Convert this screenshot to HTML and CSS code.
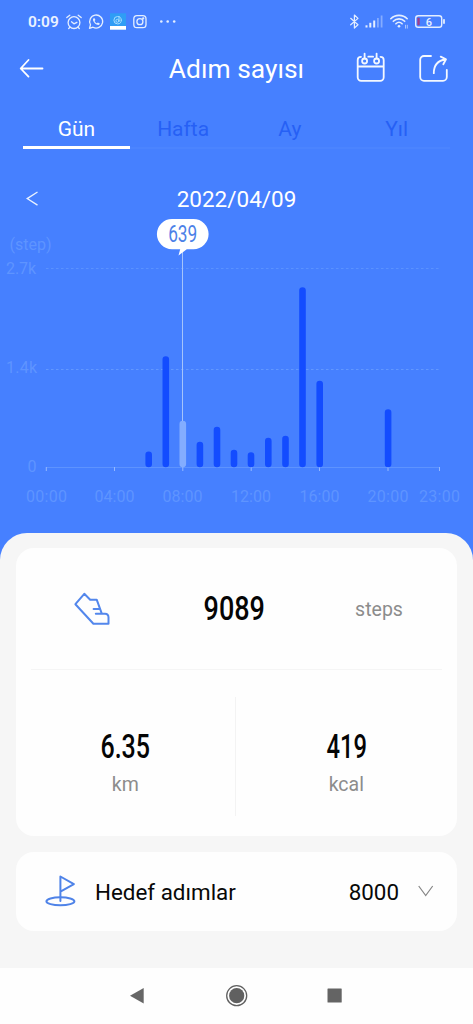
FILE: index.html
```html
<!DOCTYPE html>
<html lang="tr">
<head>
<meta charset="utf-8">
<title>Adım sayısı</title>
<link rel="stylesheet" href="styles.css">
</head>
<body>
<div class="screen">
  <div class="status">
    <span class="clock">0:09</span>
    <svg class="status-left" width="106" height="20" viewBox="64 12 106 20" fill="none" stroke="#e4eeff" stroke-width="1.3" stroke-linecap="round" stroke-linejoin="round">
      <circle cx="74" cy="22.6" r="5.9"/><path d="M71.5 21.8l2.4 2 3-1.5M66.800 17.600l3-2.400M81.200 17.600l-3-2.400M70 27.200l-1.300 1.300M78 27.200l1.300 1.300"/>
      <path d="M89.500 28.300l1-3.600a6.500 6.500 0 1 1 2.500 2.500z"/>
      <path d="M93.600 18.300c-1.300 1-.5 3.300 1.200 4.900 1.700 1.600 3.900 2.300 4.800 1.100l.2-.9-1.900-1-1 .9c-1.200-.5-1.900-1.200-2.300-2.300l.8-.9-.8-1.800z" fill="#e4eeff" stroke="none"/>
      <path d="M110 13.300h16v16.200h-16z" fill="#2f9df5" stroke="none"/><path d="M110 26h16v3.700h-16z" fill="#fff" stroke="none"/>
      <circle cx="117.600" cy="20.200" r="3.700" stroke="#a5dcff" stroke-width="1"/><circle cx="117.400" cy="20.800" r="1.500" stroke="#a5dcff" stroke-width="1"/><path d="M119 16.500v5" stroke="#a5dcff" stroke-width="1"/>
      <rect x="133.800" y="15.700" width="12.200" height="12" rx="3.200"/><circle cx="139.900" cy="21.700" r="3"/><circle cx="143.200" cy="18.400" r=".5"/>
      <g fill="#e4eeff" stroke="none"><circle cx="161.300" cy="21.500" r="1.300"/><circle cx="167.700" cy="21.500" r="1.300"/></g>
    </svg>
    <svg class="status-dot" width="7" height="20" viewBox="170 12 7 20"><circle cx="174.200" cy="21.500" r="1.300" fill="#e4eeff"/></svg>
    <svg class="status-right" width="100" height="20" viewBox="347 12 100 20" fill="none" stroke="#e4eeff" stroke-width="1.200" stroke-linecap="round" stroke-linejoin="round">
      <path d="M350.700 18.300l7.300 6.400-3.600 3.300V15l3.600 3.400-7.300 6.400"/>
      <g stroke="none" fill="#e4eeff"><rect x="365.500" y="25.300" width="2" height="2.200"/><rect x="369.300" y="22.800" width="2" height="4.700"/><rect x="373.200" y="20.500" width="2" height="7"/><rect x="377" y="18" width="1.800" height="9.500" opacity=".4"/><rect x="380.700" y="15.500" width="1.800" height="12" opacity=".4"/></g>
      <path d="M390.800 18.700c4.400-4.500 12-4.500 16.400 0M393.300 21.300c3.200-3.200 8.200-3.200 11.400 0M395.900 23.800c1.800-1.800 4.400-1.800 6.200 0" stroke-width="1.600"/><circle cx="399" cy="26.200" r="1.300" fill="#e4eeff" stroke="none"/><path d="M405.500 25.200v3M407.300 25.200v3" stroke-width=".9" opacity=".7"/>
      <rect x="415.700" y="15.700" width="26" height="11.600" rx="2.600" stroke-width="1.400"/><path d="M444 19.800v3.200" stroke-width="1.800"/><rect x="417.400" y="17.700" width="2.300" height="7.600" rx=".7" fill="#a33b87" stroke="none"/>
      <text x="429" y="25.500" class="battery-text">6</text>
    </svg>
  </div>

  <header class="header">
    <svg class="back" width="28" height="24" viewBox="18 57 28 24" fill="none" stroke="#fff" stroke-width="1.800" stroke-linecap="round" stroke-linejoin="round"><path d="M42.500 68.500H20.700M28.500 60l-7.800 8.500 7.800 8.100"/></svg>
    <h1 class="title">Adım sayısı</h1>
    <svg class="actions" width="96" height="34" viewBox="354 51 96 34" fill="none" stroke="#f4f8ff" stroke-width="1.800" stroke-linecap="round" stroke-linejoin="round">
      <path d="M361 56.800c-2.200 0-3.300 1.500-3.300 3.200v17.300a3.500 3.500 0 0 0 3.500 3.500h19a3.500 3.500 0 0 0 3.500-3.500V60c0-1.700-1.100-3.200-3.200-3.200M368.300 56.700h4.800M357.700 66.500h26"/>
      <circle cx="364.600" cy="61" r="2.500"/><circle cx="376.600" cy="61" r="2.500"/><path d="M364.600 53.600v4.800M376.600 53.600v4.800"/>
      <path d="M431 56h-7a3.800 3.800 0 0 0-3.800 3.800v17.200a3.800 3.800 0 0 0 3.800 3.800h19a3.800 3.800 0 0 0 3.800-3.800v-7.200M433.800 73.200c0-8 3.400-12.600 11.700-13.700M440.700 56.600l5.300 2.700-2.700 5"/>
    </svg>
  </header>

  <nav class="tabs">
    <span class="tab active">Gün</span><span class="tab">Hafta</span><span class="tab">Ay</span><span class="tab">Yıl</span>
  </nav>

  <div class="date-row">
    <svg class="prev" width="16" height="18" viewBox="24 190 16 18" fill="none" stroke="#eaf2ff" stroke-width="1.300"><path d="M37.500 192l-10.300 6.600 10.300 6.500"/></svg>
    <span class="date">2022/04/09</span>
  </div>

  <svg class="chart" width="473" height="300" viewBox="0 215 473 300">
    <g stroke="#5a92ff" stroke-width="1" stroke-dasharray="2.500 2.500"><path d="M46 268.500h393"/><path d="M46 369.500h393" stroke="#6298ff"/></g>
    <path d="M46 467.500h393" stroke="#5d93ff"/>
    <g class="axis">
      <text x="9.500" y="249.500" textLength="42">(step)</text>
      <text x="6" y="273.500" textLength="30">2.7k</text>
      <text x="6" y="373" textLength="31">1.4k</text>
      <text x="27.500" y="472">0</text>
      <text x="26" y="502" textLength="41">00:00</text>
      <text x="94.500" y="502" textLength="40">04:00</text>
      <text x="162.500" y="502" textLength="40">08:00</text>
      <text x="231" y="502" textLength="40">12:00</text>
      <text x="299.500" y="502" textLength="40">16:00</text>
      <text x="367.500" y="502" textLength="41">20:00</text>
      <text x="419" y="502" textLength="41">23:00</text>
    </g>
    <path d="M46.300 467v4M114.500 467v4M182.800 467v4M251.200 467v4M319.500 467v4M388 467v4M439.500 467v4" stroke="#94b8ff"/>
    <path d="M182.500 252v170" stroke="#a5c4fb"/>
    <g stroke="#134cff" stroke-width="6.600" stroke-linecap="round">
      <path d="M148.700 454.800V464M165.800 359.500V464M199.900 445V464M217 430V464M234 453V464M251 455.500V464M268.300 441V464M285.500 439V464M302.500 290.500V464M319.700 384V464M388.100 412.500V464"/>
    </g>
    <path d="M182.800 424V464" stroke="#83adff" stroke-width="6.600" stroke-linecap="round"/>
    <path d="M172 219h21.500a15 15 0 0 1 0 30.200h-6.700l-8.300 6.300 1.700-6.300H172a15 15 0 0 1 0-30.200z" fill="#fff"/>
    <text class="tip" transform="translate(182.700 242.400) scale(.75 1)">639</text>
  </svg>

  <main class="sheet">
    <section class="card stats">
      <div class="steps-row">
        <svg class="shoe" width="40" height="38" viewBox="72 590 40 38" fill="none" stroke="#5387ec" stroke-width="2" stroke-linejoin="round" stroke-linecap="round"><path d="M84.300 593.800l-8.900 10.400 18 19.600h15.100v-6.300c0-2.300-1.300-3.800-3.500-3.800h-3.200l-5.100-14h-6.500zM93.600 609h6.200M95.800 613.700h6.500"/></svg>
        <span class="num">9089</span>
        <span class="unit steps-unit">steps</span>
      </div>
      <div class="pair">
        <div class="metric"><span class="num narrow">6.35</span><span class="unit">km</span></div>
        <div class="metric"><span class="num narrower">419</span><span class="unit">kcal</span></div>
      </div>
    </section>
    <section class="card goal">
      <svg width="34" height="36" viewBox="44 873 34 36" fill="none" stroke="#4f83e8" stroke-width="2" stroke-linejoin="round" stroke-linecap="round"><ellipse cx="60.400" cy="901.300" rx="14" ry="4"/><path d="M60.400 901V876.500l13.500 7.600-13.500 7.600"/></svg>
      <span class="goal-label">Hedef adımlar</span>
      <span class="goal-value">8000</span>
      <svg width="18" height="16" viewBox="417 883 18 16" fill="none" stroke="#858585" stroke-width="1.200"><path d="M418.700 886l7 9.500 7-9.500"/></svg>
    </section>
  </main>

  <footer class="navbar">
    <svg width="473" height="56" viewBox="0 968 473 56"><path d="M143.700 988v15.500L130 995.700z" fill="#666"/><circle cx="236.700" cy="995.700" r="10" fill="none" stroke="#606060" stroke-width="1.300"/><circle cx="236.700" cy="995.700" r="7.600" fill="#606060"/><rect x="327.500" y="988.600" width="14.200" height="14" rx=".5" fill="#646464"/></svg>
  </footer>
</div>
</body>
</html>
```
FILE: styles.css
```css
* { box-sizing: border-box; }
body { margin: 0; background: #4680ff; font-family: Roboto, "Noto Sans", sans-serif; }
.screen { width: 473px; height: 1024px; display: flex; flex-direction: column; overflow: hidden; background: #4680ff; }
svg { display: block; flex: none; }

.status { height: 44px; display: flex; align-items: center; padding-left: 28px; color: #eaf2ff; }
.clock { width: 36px; font-size: 15.5px; font-weight: 600; line-height: 20px; }
.status-right { margin-left: 170px; }
.battery-text { font-size: 11px; font-weight: 500; fill: #eaf2ff; stroke: none; text-anchor: middle; }

.header { height: 50px; display: grid; grid-template-columns: 28px 1fr 96px; align-items: center; padding: 0 23px 0 18px; }
.title { margin: 0; text-align: center; color: #fff; font-size: 26.4px; font-weight: 400; line-height: 32px; white-space: nowrap; padding-left: 73px; }
.actions { margin-top: -2px; }

.tabs { height: 55px; margin: 0 23px; display: grid; grid-template-columns: repeat(4, 1fr); padding-top: 15px; }
.tab { height: 40px; text-align: center; font-size: 21px; line-height: 41px; color: #2660f5; border-bottom: 2px solid #4b84ff; }
.tab.active { color: #fff; border-bottom: 3px solid #fff; }

.date-row { height: 66px; display: grid; grid-template-columns: 16px 1fr 16px; align-items: center; padding: 34px 24px 0; }
.date { text-align: center; color: #fff; font-size: 22.5px; line-height: 30px; padding-bottom: 1px; }
.chart { margin-bottom: 17.5px; }
.axis { fill: #5e94ff; font-size: 16px; }
.tip { fill: #4d82e8; font-size: 23px; text-anchor: middle; }

.sheet { height: 435.5px; background: #f6f6f6; border-radius: 27px 27px 0 0; padding: 15.5px 16px 0; }
.card { background: #fefefe; border-radius: 18px; }
.stats { height: 288px; }
.steps-row { height: 122px; margin: 0 15px; border-bottom: 1px solid #f5f5f5; display: grid; grid-template-columns: 90px 1fr 126px; align-items: center; }
.shoe { margin-left: 41px; }
.num { text-align: center; color: #050505; font-size: 32.5px; font-weight: 500; line-height: 36px; transform: scaleX(.83); }
.steps-row .num { padding-left: 38px; }
.num.narrow { transform: scaleX(.77); }
.num.narrower { transform: scaleX(.73); }
.unit { color: #8c8c8c; font-size: 19.5px; line-height: 24px; text-align: center; }
.steps-unit { padding-top: 2px; }
.pair { display: grid; grid-template-columns: 219.5px 1fr; padding-top: 27px; }
.metric { height: 119px; display: flex; flex-direction: column; align-items: center; padding-top: 32px; gap: 8px; }
.metric:first-child { border-right: 1px solid #f3f3f3; }

.goal { height: 78.5px; margin-top: 16px; padding: 0 22px 0 28px; display: flex; align-items: center; font-size: 22.4px; color: #080808; }
.goal-label { margin-left: 17px; padding-top: 1px; }
.goal-value { margin: 0 18px 0 auto; padding-top: 1px; }
.navbar { height: 56px; background: #fefefe; }
```
